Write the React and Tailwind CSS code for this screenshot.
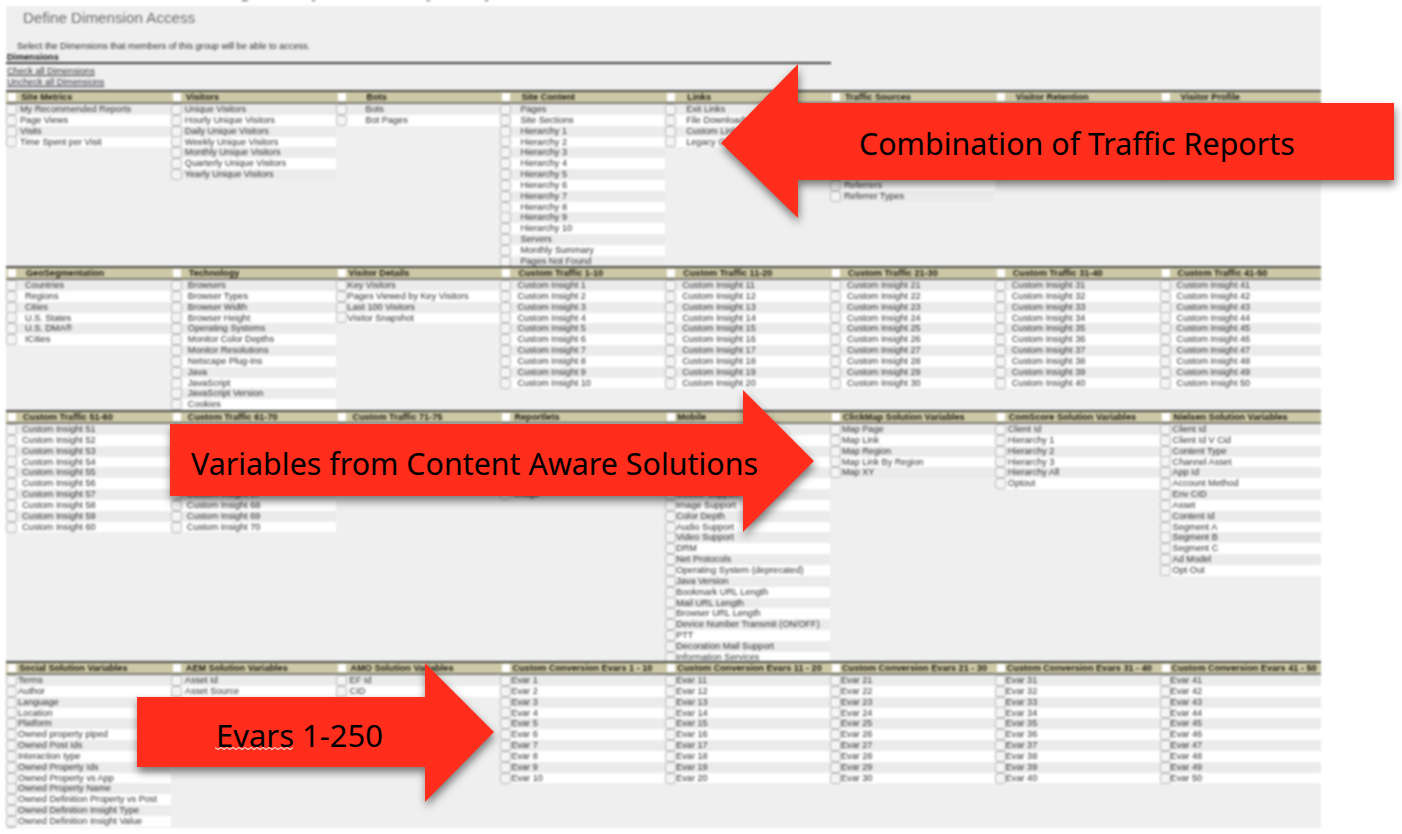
const range = (a, b, p) => Array.from({ length: b - a + 1 }, (_, i) => `${p} ${a + i}`);
const blanks = (n) => Array.from({ length: n }, () => "");

const sections = [
  {
    h: "h-[176px]",
    cols: [
      { t: "Site Metrics", p: "pl-[4px]", rows: ["My Recommended Reports", "Page Views", "Visits", "Time Spent per Visit"] },
      { t: "Visitors", p: "pl-[4px]", rows: ["Unique Visitors", "Hourly Unique Visitors", "Daily Unique Visitors", "Weekly Unique Visitors", "Monthly Unique Visitors", "Quarterly Unique Visitors", "Yearly Unique Visitors"] },
      { t: "Bots", p: "pl-[20px]", rows: ["Bots", "Bot Pages"] },
      { t: "Site Content", p: "pl-[10px]", rows: ["Pages", "Site Sections", ...range(1, 10, "Hierarchy"), "Servers", "Monthly Summary", "Pages Not Found"] },
      { t: "Links", p: "pl-[11px]", rows: ["Exit Links", "File Downloads", "Custom Links", "Legacy Others"] },
      { t: "Traffic Sources", p: "pl-[4px]", rows: [...blanks(7), "Referrers", "Referrer Types"] },
      { t: "Visitor Retention", p: "pl-[10px]", rows: blanks(7) },
      { t: "Visitor Profile", p: "pl-[10px]", rows: blanks(7) },
    ],
  },
  {
    h: "h-[144px]",
    cols: [
      { t: "GeoSegmentation", p: "pl-[9px]", rows: ["Countries", "Regions", "Cities", "U.S. States", "U.S. DMA®", "ICities"] },
      { t: "Technology", p: "pl-[7px]", rows: ["Browsers", "Browser Types", "Browser Width", "Browser Height", "Operating Systems", "Monitor Color Depths", "Monitor Resolutions", "Netscape Plug-Ins", "Java", "JavaScript", "JavaScript Version", "Cookies"] },
      { t: "Visitor Details", p: "pl-[2px]", rows: ["Key Visitors", "Pages Viewed by Key Visitors", "Last 100 Visitors", "Visitor Snapshot"] },
      { t: "Custom Traffic 1-10", p: "pl-[7px]", rows: range(1, 10, "Custom Insight") },
      { t: "Custom Traffic 11-20", p: "pl-[7px]", rows: range(11, 20, "Custom Insight") },
      { t: "Custom Traffic 21-30", p: "pl-[7px]", rows: range(21, 30, "Custom Insight") },
      { t: "Custom Traffic 31-40", p: "pl-[7px]", rows: range(31, 40, "Custom Insight") },
      { t: "Custom Traffic 41-50", p: "pl-[7px]", rows: range(41, 50, "Custom Insight") },
    ],
  },
  {
    h: "h-[251px]",
    cols: [
      { t: "Custom Traffic 51-60", p: "pl-[6px]", rows: range(51, 60, "Custom Insight") },
      { t: "Custom Traffic 61-70", p: "pl-[6px]", rows: [...blanks(6), ...range(67, 70, "Custom Insight")] },
      { t: "Custom Traffic 71-75", p: "pl-[6px]", rows: blanks(5) },
      { t: "Reportlets", p: "pl-[3px]", rows: [...blanks(6), "Usage"] },
      { t: "Mobile", p: "pl-px", rows: [...blanks(6), "Cookie Support", "Image Support", "Color Depth", "Audio Support", "Video Support", "DRM", "Net Protocols", "Operating System (deprecated)", "Java Version", "Bookmark URL Length", "Mail URL Length", "Browser URL Length", "Device Number Transmit (ON/OFF)", "PTT", "Decoration Mail Support", "Information Services"] },
      { t: "ClickMap Solution Variables", p: "pl-[2px]", rows: ["Map Page", "Map Link", "Map Region", "Map Link By Region", "Map XY"] },
      { t: "ComScore Solution Variables", p: "pl-[3px]", rows: ["Client Id", "Hierarchy 1", "Hierarchy 2", "Hierarchy 3", "Hierarchy All", "Optout"] },
      { t: "Nielsen Solution Variables", p: "pl-[3px]", rows: ["Client Id", "Client Id V Cid", "Content Type", "Channel Asset", "App Id", "Account Method", "Env CID", "Asset", "Content Id", "Segment A", "Segment B", "Segment C", "Ad Model", "Opt Out"] },
    ],
  },
  {
    h: "h-[167px]",
    cols: [
      { t: "Social Solution Variables", p: "pl-[2px]", rows: ["Terms", "Author", "Language", "Location", "Platform", "Owned property piped", "Owned Post Ids", "Interaction type", "Owned Property Ids", "Owned Property vs App", "Owned Property Name", "Owned Definition Property vs Post", "Owned Definition Insight Type", "Owned Definition Insight Value", "Owned Definition Metric"] },
      { t: "AEM Solution Variables", p: "pl-[4px]", rows: ["Asset Id", "Asset Source"] },
      { t: "AMO Solution Variables", p: "pl-[4px]", rows: ["EF Id", "CID"] },
      { t: "Custom Conversion Evars 1 - 10", p: "pl-px", rows: range(1, 10, "Evar") },
      { t: "Custom Conversion Evars 11 - 20", p: "pl-px", rows: range(11, 20, "Evar") },
      { t: "Custom Conversion Evars 21 - 30", p: "pl-px", rows: range(21, 30, "Evar") },
      { t: "Custom Conversion Evars 31 - 40", p: "pl-px", rows: range(31, 40, "Evar") },
      { t: "Custom Conversion Evars 41 - 50", p: "pl-px", rows: range(41, 50, "Evar") },
    ],
  },
];

const Box = () => (
  <span className="relative z-[1] block w-[11px] h-[11px] -mr-px shrink-0 rounded-[3px] border border-[#b8b8b8] bg-[#f4f4f4]" />
);

function Column({ col }) {
  return (
    <div className="min-w-0">
      {col.rows.map((r, i) => (
        <div key={i} className="flex items-center h-[10.85px]">
          <Box />
          <div className={`flex-1 h-full leading-[10.85px] whitespace-nowrap overflow-hidden ${col.p} ${i % 2 === 0 ? "bg-[#ebebeb]" : "bg-white"}`}>
            {r}
          </div>
        </div>
      ))}
    </div>
  );
}

function Section({ s }) {
  return (
    <section className={`${s.h} overflow-hidden`}>
      <div className="grid grid-cols-[repeat(8,164.8px)] h-[14px] bg-[#cdc8a6] border-t-2 border-t-[#4a4a44] border-b-2 border-b-[#7d7d74]">
        {s.cols.map((c, i) => (
          <div key={i} className="flex items-center">
            <span className="block w-[8px] h-[8px] ml-[2px] shrink-0 bg-white" />
            <span className={`ml-px font-bold text-[#14140c] leading-[10px] whitespace-nowrap ${c.p}`}>{c.t}</span>
          </div>
        ))}
      </div>
      <div className="grid grid-cols-[repeat(8,164.8px)]">
        {s.cols.map((c, i) => (
          <Column key={i} col={c} />
        ))}
      </div>
    </section>
  );
}

export default function App() {
  return (
    <div className="relative w-[1402px] h-[834px] overflow-hidden bg-white font-['Liberation_Sans',Arial,sans-serif]">
      <div className="blur-[0.8px]">
        <div className="h-[6px] overflow-hidden">
          <div className="flex -mt-[23px] text-[22px] leading-[24px] font-bold text-[#222] whitespace-nowrap">
            <span className="w-[252px] text-right">Defining</span>
            <span className="w-[72px] text-right">Group</span>
            <span className="w-[106px] text-right">Access (</span>
            <span className="w-[62px] text-right">All)</span>
          </div>
        </div>
        <main className="ml-[6px] w-[1315px] h-[822px] bg-[#efefef] overflow-hidden text-[9.15px] text-[#2c2c34]">
          <h1 className="h-[24px] pl-[17px] leading-[24px] text-[15.2px] font-normal text-[#6a6a6a]">Define Dimension Access</h1>
          <p className="mt-[11px] h-[11px] pl-[11px] leading-[11px] text-[#2c2c34]">Select the Dimensions that members of this group will be able to access.</p>
          <div className="h-[10px] pl-px leading-[10px] font-bold text-[#111118]">Dimensions</div>
          <div className="w-[825px] h-[2px] bg-[#3f3f3f]" />
          <a className="block mt-[2px] h-[11px] pl-px leading-[11px] underline text-[#33333b]">Check all Dimensions</a>
          <a className="block h-[11px] pl-px leading-[11px] underline text-[#33333b]">Uncheck all Dimensions</a>
          <div className="h-[2px]" />
          {sections.map((s, i) => (
            <Section key={i} s={s} />
          ))}
        </main>
      </div>

      <svg className="absolute left-0 top-0 w-[1402px] h-[834px] drop-shadow-[1px_5px_4px_rgba(0,0,0,0.5)]" viewBox="0 0 1402 834">
        <polygon fill="#ff2d1c" points="721,143 798,64 798,103 1394,103 1394,180 798,180 798,218" />
        <polygon fill="#ff2d1c" points="170,424 743,424 743,390 814,461 743,532 743,496 170,496" />
        <polygon fill="#ff2d1c" points="137,697 425,697 425,663 494,732 425,802 425,767 137,767" />
      </svg>
      <div className="absolute left-[859px] top-[122px] text-[30.4px] leading-[44px] text-black font-['Noto_Sans',sans-serif] whitespace-nowrap">Combination of Traffic Reports</div>
      <div className="absolute left-[191px] top-[442px] text-[30.4px] leading-[44px] text-black font-['Noto_Sans',sans-serif] whitespace-nowrap">Variables from Content Aware Solutions</div>
      <div className="absolute left-[216px] top-[713px] text-[31px] leading-[44px] text-black font-['Noto_Sans',sans-serif] whitespace-nowrap">Evars 1-250</div>
      <svg className="absolute left-[215px] top-[746px] w-[78px] h-[5px]" viewBox="0 0 78 5">
        <path d="M0 1.5 L3 3.5 L6 1.5 L9 3.5 L12 1.5 L15 3.5 L18 1.5 L21 3.5 L24 1.5 L27 3.5 L30 1.5 L33 3.5 L36 1.5 L39 3.5 L42 1.5 L45 3.5 L48 1.5 L51 3.5 L54 1.5 L57 3.5 L60 1.5 L63 3.5 L66 1.5 L69 3.5 L72 1.5 L75 3.5 L78 1.5" fill="none" stroke="#ffc9c2" strokeWidth="1.2" />
      </svg>
    </div>
  );
}
